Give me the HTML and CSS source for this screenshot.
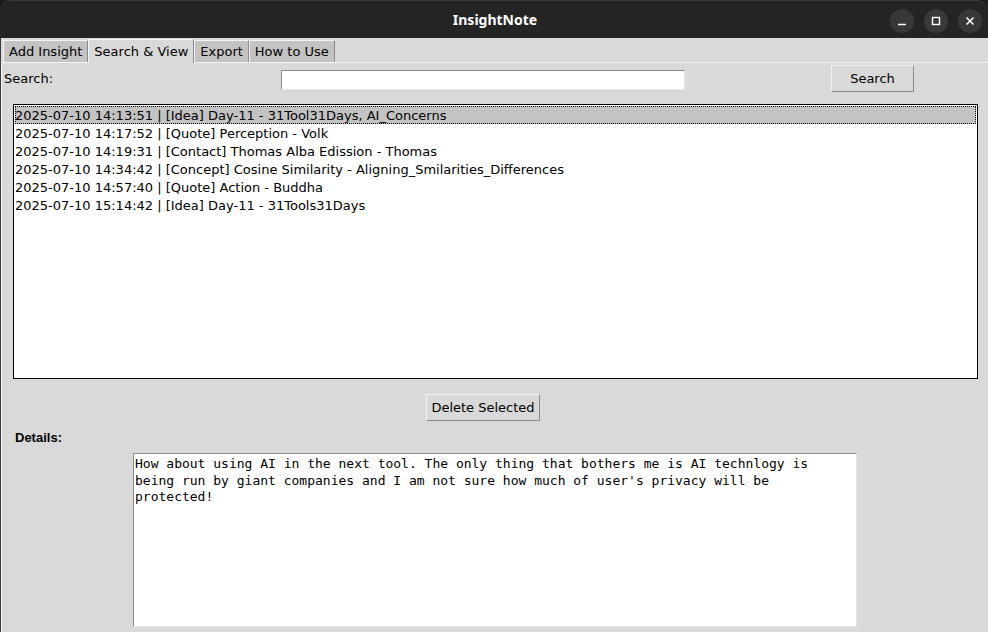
FILE: index.html
```html
<!DOCTYPE html>
<html>
<head>
<meta charset="utf-8">
<link rel="stylesheet" href="styles.css">
</head>
<body>
<div class="window">
  <div class="titlebar">
    <div class="title">InsightNote</div>
    <div class="controls">
      <span class="ctl"><svg width="24" height="24" viewBox="0 0 24 24"><line x1="8" y1="15.5" x2="16" y2="15.5" stroke="#fff" stroke-width="1.5"/></svg></span>
      <span class="ctl"><svg width="24" height="24" viewBox="0 0 24 24"><rect x="8.5" y="8.5" width="7" height="7" fill="none" stroke="#fff" stroke-width="1.4"/></svg></span>
      <span class="ctl"><svg width="24" height="24" viewBox="0 0 24 24"><path d="M8.5 8.5 L15.5 15.5 M15.5 8.5 L8.5 15.5" stroke="#fff" stroke-width="1.5"/></svg></span>
    </div>
  </div>
  <div class="content">
    <div class="tabs">
      <div class="tab">Add Insight</div>
      <div class="tab active">Search &amp; View</div>
      <div class="tab">Export</div>
      <div class="tab">How to Use</div>
    </div>
    <div class="pane">
      <div class="search-row">
        <span class="label">Search:</span>
        <div class="entry"></div>
        <div class="button search-btn">Search</div>
      </div>
      <div class="listbox">
        <div class="row selected">2025-07-10 14:13:51 | [Idea] Day-11 - 31Tool31Days, AI_Concerns</div>
        <div class="row">2025-07-10 14:17:52 | [Quote] Perception - Volk</div>
        <div class="row">2025-07-10 14:19:31 | [Contact] Thomas Alba Edission - Thomas</div>
        <div class="row">2025-07-10 14:34:42 | [Concept] Cosine Similarity - Aligning_Smilarities_Differences</div>
        <div class="row">2025-07-10 14:57:40 | [Quote] Action - Buddha</div>
        <div class="row">2025-07-10 15:14:42 | [Idea] Day-11 - 31Tools31Days</div>
      </div>
      <div class="delete-row">
        <div class="button delete-btn">Delete Selected</div>
      </div>
      <div class="details-label">Details:</div>
      <div class="textarea">How about using AI in the next tool. The only thing that bothers me is AI technlogy is
being run by giant companies and I am not sure how much of user's privacy will be
protected!</div>
    </div>
  </div>
</div>
</body>
</html>
```

FILE: styles.css
```css
html, body {
  margin: 0;
  padding: 0;
  background: #1a1a1a;
}
.window {
  width: 988px;
  height: 632px;
  display: flex;
  flex-direction: column;
  overflow: hidden;
}
.titlebar {
  height: 38px;
  flex: none;
  background: #242424;
  border-radius: 11px 11px 0 0;
  border-top: 1px solid #3a3a3a;
  box-sizing: border-box;
  display: flex;
  align-items: center;
  justify-content: center;
  position: relative;
}
.title {
  color: #ffffff;
  font-family: "Noto Sans", "DejaVu Sans", sans-serif;
  font-weight: bold;
  font-size: 14px;
  margin-left: 2px;
}
.controls {
  position: absolute;
  right: 6px;
  top: 8px;
  display: flex;
  gap: 10px;
}
.ctl {
  width: 24px;
  height: 24px;
  border-radius: 50%;
  background: #383838;
  display: block;
}
.ctl svg { display: block; }
.content {
  flex: 1;
  background: #d9d9d9;
  border-left: 1px solid #3c3c3c;
  display: flex;
  flex-direction: column;
  font-family: "DejaVu Sans", sans-serif;
  font-size: 13px;
  color: #000;
}
.tabs {
  height: 24px;
  display: flex;
  align-items: flex-end;
  padding-left: 2px;
}
.tab {
  height: 21px;
  line-height: 21px;
  padding: 0 5px 0 5px;
  background: #c3c3c3;
  border-top: 1px solid #f4f4f4;
  border-left: 1px solid #f4f4f4;
  border-right: 1px solid #8a8a8a;
  box-sizing: content-box;
}
.tab.active {
  height: 23px;
  line-height: 23px;
  background: #d9d9d9;
  margin-bottom: -1px;
  position: relative;
  z-index: 1;
}
.pane {
  flex: 1;
  border-top: 1px solid #f4f4f4;
  border-left: 1px solid #f4f4f4;
  display: flex;
  flex-direction: column;
}
.search-row {
  display: flex;
  align-items: center;
  height: 27px;
  margin-top: 2px;
}
.label {
  width: 279px;
  padding-left: 2px;
  box-sizing: border-box;
  flex: none;
}
.entry {
  width: 404px;
  height: 20px;
  box-sizing: border-box;
  background: #fff;
  border-top: 1px solid #8a8a8a;
  border-left: 1px solid #8a8a8a;
  border-right: 1px solid #e6e6e6;
  border-bottom: 1px solid #e6e6e6;
  margin-top: 2px;
}
.button {
  box-sizing: border-box;
  background: #d9d9d9;
  border-top: 1px solid #f4f4f4;
  border-left: 1px solid #f4f4f4;
  border-right: 1px solid #8a8a8a;
  border-bottom: 1px solid #8a8a8a;
  display: flex;
  align-items: center;
  justify-content: center;
}
.search-btn {
  width: 83px;
  height: 27px;
  margin-left: 146px;
}
.listbox {
  margin: 12px 10px 0 11px;
  height: 275px;
  box-sizing: border-box;
  border: 1px solid #000;
  background: #fff;
  padding: 1px;
  flex: none;
}
.row {
  height: 18px;
  line-height: 19px;
  padding-left: 0;
  white-space: nowrap;
  box-sizing: border-box;
}
.row.selected {
  background: #c3c3c3;
  outline: 1px dotted #000;
  outline-offset: -1px;
}
.delete-row {
  margin-top: 15px;
  display: flex;
}
.delete-btn {
  margin-left: 424px;
  width: 114px;
  height: 27px;
}
.details-label {
  font-family: "Liberation Sans", Arial, sans-serif;
  font-weight: bold;
  font-size: 13px;
  margin-top: 9px;
  margin-left: 13px;
  height: 16px;
  line-height: 16px;
}
.textarea {
  margin-top: 7px;
  margin-left: 131px;
  width: 724px;
  flex: 1;
  box-sizing: border-box;
  background: #fff;
  border-top: 1px solid #8a8a8a;
  border-left: 1px solid #8a8a8a;
  border-right: 1px solid #e6e6e6;
  border-bottom: 1px solid #e6e6e6;
  font-family: "DejaVu Sans Mono", monospace;
  font-size: 13px;
  line-height: 16.5px;
  padding: 2px 1px;
  white-space: pre;
  margin-bottom: 5px;
}
```
